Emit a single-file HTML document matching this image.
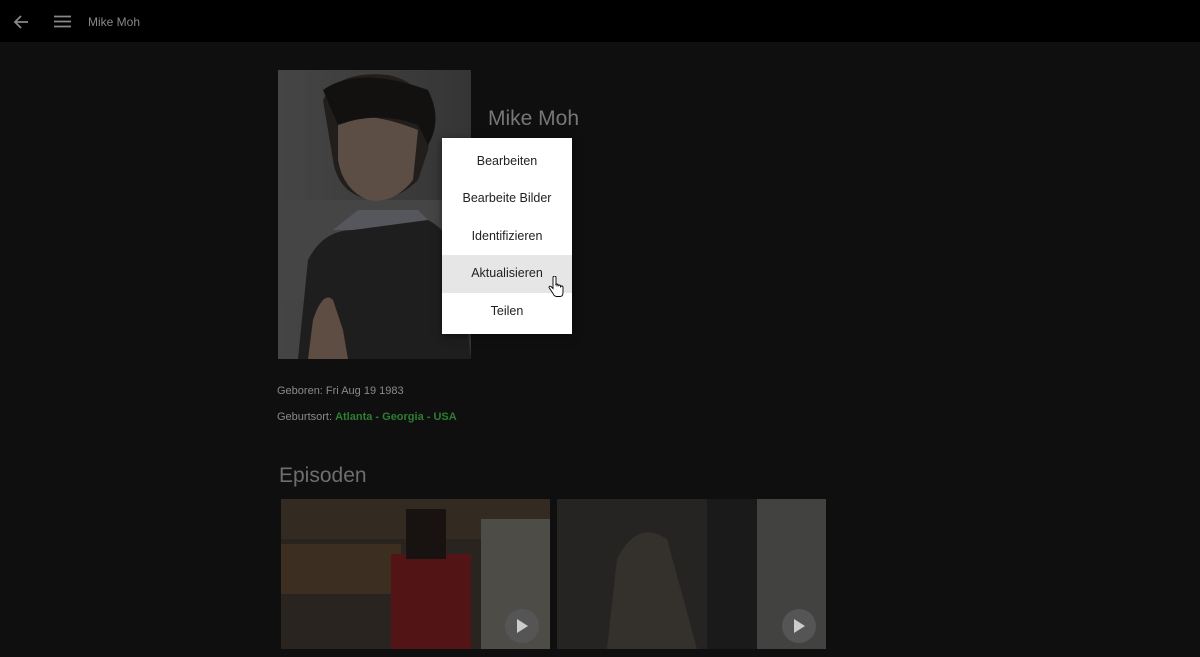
<!DOCTYPE html>
<html><head><style>
body{margin:0;width:1200px;height:657px;background:#0f0f0f;overflow:hidden;font-family:"Liberation Sans",sans-serif;position:relative}
.hdr{position:absolute;left:0;top:0;width:1200px;height:42px;background:#000}
.t{position:absolute;color:#8a8a8a}
.menu{position:absolute;left:442px;top:138px;width:130px;height:196px;background:#fff;box-shadow:0 2px 8px rgba(0,0,0,.5)}
.menu div{height:37.4px;line-height:37.4px;text-align:center;font-size:12.5px;color:#222}
.menu div:first-child{margin-top:5px}
</style></head><body>
<div class="hdr">
<svg style="position:absolute;left:12px;top:13px" width="18" height="18" viewBox="0 0 18 18"><path d="M16 9H3M9 3L3 9l6 6" stroke="#888" stroke-width="1.8" fill="none"/></svg>
<svg style="position:absolute;left:54px;top:15px" width="17" height="13"><path d="M0 1.5h17M0 6.5h17M0 11.5h17" stroke="#888" stroke-width="1.8"/></svg>
<div class="t" style="left:88px;top:15px;font-size:12px;color:#888">Mike Moh</div>
</div>
<svg style="position:absolute;left:278px;top:70px" width="193" height="289" viewBox="0 0 193 289">
<defs><linearGradient id="g" x1="0" x2="1"><stop offset="0" stop-color="#454545"/><stop offset="1" stop-color="#353535"/></linearGradient></defs>
<rect width="193" height="289" fill="url(#g)"/>
<rect y="130" width="193" height="100" fill="#454545"/>
<path d="M45 30Q60 0 110 5Q160 15 150 80L140 110Q120 130 95 130Q60 125 55 90Z" fill="#221e1b"/>
<path d="M60 50Q90 40 140 60L135 110Q115 135 90 130Q65 120 60 90Z" fill="#5c4e45"/>
<path d="M45 20Q80 -5 150 20Q165 50 150 75L140 55Q100 40 60 55Z" fill="#121110"/>
<path d="M55 160L80 140H140L160 160Z" fill="#55575d"/>
<path d="M20 289L30 190Q45 160 75 160L150 150Q180 165 185 220L193 289Z" fill="#1e1e1e"/>
<path d="M30 289L35 250Q45 220 55 230L65 260L70 289Z" fill="#5e4d42"/>
</svg>
<div class="t" style="left:488px;top:107px;font-size:21px;color:#777">Mike Moh</div>
<div class="menu"><div>Bearbeiten</div><div>Bearbeite Bilder</div><div>Identifizieren</div><div style="background:#e6e6e6">Aktualisieren</div><div>Teilen</div></div>
<svg style="position:absolute;left:548px;top:276px" width="16" height="22" viewBox="0 0 16 22"><path d="M5 1.5v11l-2-2q-2-1-2 1l4 6q1 3 4 3h3q3 0 3-4v-5q0-1.5-1.3-1.5t-1.2 1.5v-1q0-1.5-1.3-1.5t-1.2 1.5v-1q0-1.5-1.3-1.5T8 9V1.5Q8 0 6.5 0T5 1.5z" fill="#fff" stroke="#000" stroke-width="0.9"/></svg>
<div class="t" style="left:277px;top:385px;font-size:11px;color:#8a8a8a">Geboren: Fri Aug 19 1983</div>
<div class="t" style="left:277px;top:411px;font-size:11px;color:#8a8a8a">Geburtsort: <b style="color:#2e7d32">Atlanta - Georgia - USA</b></div>
<div class="t" style="left:279px;top:464px;font-size:21px;color:#6e6e6e">Episoden</div>
<svg style="position:absolute;left:281px;top:499px" width="269" height="150">
<rect width="269" height="150" fill="#2a2420"/>
<rect y="0" width="269" height="40" fill="#332a22"/>
<rect x="0" y="45" width="120" height="50" fill="#3d2e22"/>
<rect x="200" y="20" width="69" height="130" fill="#4e4c47"/>
<rect x="110" y="55" width="80" height="95" fill="#521414"/>
<rect x="125" y="10" width="40" height="50" fill="#181210"/>
<circle cx="241" cy="127" r="17" fill="#555"/><path d="M236 120v14l11-7z" fill="#ccc"/>
</svg>
<svg style="position:absolute;left:557px;top:499px" width="269" height="150">
<rect width="269" height="150" fill="#262422"/>
<rect x="200" width="69" height="150" fill="#424240"/>
<rect x="150" width="50" height="150" fill="#1a1a1a"/>
<path d="M50 150L60 60Q80 20 110 40L140 150Z" fill="#34302c"/>
<circle cx="242" cy="127" r="17" fill="#555"/><path d="M237 120v14l11-7z" fill="#ccc"/>
</svg>
</body></html>
